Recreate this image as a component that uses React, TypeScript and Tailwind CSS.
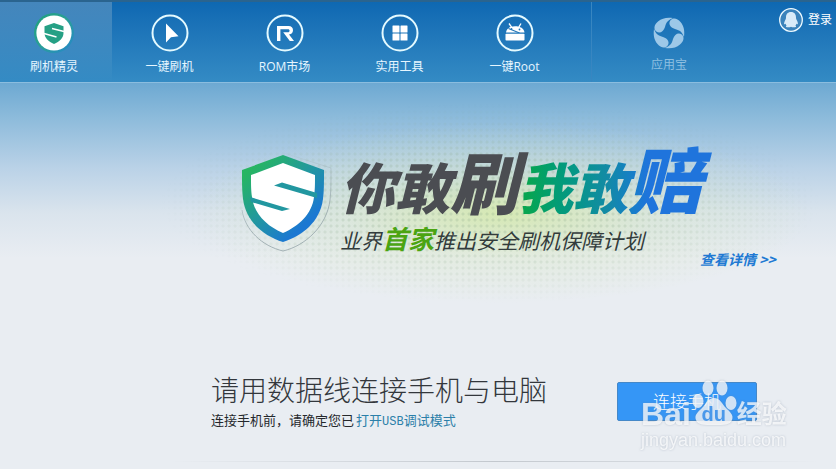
import React from 'react'

const SANS = "font-['Open_Sans','Noto_Sans_CJK_SC',sans-serif]"

function ShieldIcon() {
  return (
    <svg className="w-10 h-10" viewBox="0 0 40 40">
      <defs>
        <linearGradient id="ring" x1="0" y1="0" x2="1" y2="1">
          <stop offset="0" stopColor="#1fa07a" />
          <stop offset="0.5" stopColor="#2a9f98" />
          <stop offset="1" stopColor="#2585cf" />
        </linearGradient>
      </defs>
      <circle cx="20" cy="20" r="20" fill="url(#ring)" />
      <circle cx="20" cy="20" r="17.6" fill="#fff" />
      <path d="M20 10l9.5 3.2v6.8c0 5-4 8.5-9.5 11-5.5-2.5-9.5-6-9.5-11v-6.8z" fill="#25a085" />
      <path d="M30 18.5l-12-3M10 20.5l12.5 3.5" stroke="#fff" strokeWidth="1.5" fill="none" />
    </svg>
  )
}

function CursorIcon() {
  return (
    <path d="M16 10.500v19l5-5.200 7.500-1z" fill="#fff" />
  )
}

function RomIcon() {
  return (
    <path
      d="M12 13h11.5c3 0 4.5 1.8 4.5 4.200 0 2.300-1.400 4-4 4.200l5 6.600h-4.200l-6.600-8.700h4.800c1 0 1.600-.6 1.600-1.500s-.6-1.600-1.600-1.600h-7.600V28H12z"
      fill="#fff"
    />
  )
}

function GridIcon() {
  return (
    <g fill="#fff">
      <rect x="12.5" y="12.5" width="7" height="7" rx="0.5" />
      <rect x="20.5" y="12.5" width="7" height="7" rx="0.5" />
      <rect x="12.5" y="20.5" width="7" height="7" rx="0.5" />
      <rect x="20.5" y="20.5" width="7" height="7" rx="0.5" />
    </g>
  )
}

function RootIcon() {
  return (
    <g>
      <path d="M11 19.5c.6-4 3.6-6.2 9-6.2s8.9 2.2 9.5 6.2z" fill="#fff" />
      <path d="M14 10.5l2.6 3.6M26 10.5l-2.2 3.6" stroke="#fff" strokeWidth="1.3" />
      <path d="M13.5 15.5l11 4.5" stroke="#2276b8" strokeWidth="1.2" />
      <circle cx="16.5" cy="16" r="0.9" fill="#2276b8" />
      <circle cx="24.5" cy="16.5" r="0.9" fill="#2276b8" />
      <rect x="10.5" y="20.8" width="19" height="6.8" rx="0.8" fill="#fff" />
    </g>
  )
}

const NAV_ITEMS = [
  { label: '一键刷机', Icon: CursorIcon },
  { label: 'ROM市场', Icon: RomIcon },
  { label: '实用工具', Icon: GridIcon },
  { label: '一键Root', Icon: RootIcon },
]

const PETAL = 'M17.5 3.3C20 .2 24.5 1.2 27.5 5 31 9 31.8 14 31 20 28.5 13.8 26 13.2 22 12 17 10.5 15 6.5 17.5 3.3z'

function Header() {
  return (
    <header className="flex h-[83px] border-t-2 border-t-[#2a648f] border-b border-b-[#8bbddf] bg-linear-to-b from-[#0e68b2] to-[#348bc4] text-xs text-[#e6f6ff]">
      <nav className="flex">
        <button
          type="button"
          className="flex flex-col items-center w-28 pt-[11px] pr-1 bg-linear-to-b from-[#4486bc] to-[#348bc4]"
        >
          <ShieldIcon />
          <span className="mt-1 leading-5">刷机精灵</span>
        </button>
        {NAV_ITEMS.map(({ label, Icon }) => (
          <button key={label} type="button" className="flex flex-col items-center w-[115px] pt-[11px]">
            <svg className="w-10 h-10" viewBox="0 0 40 40">
              <circle cx="20" cy="20" r="17.5" fill="none" stroke="#e4faff" strokeWidth="2" />
              <Icon />
            </svg>
            <span className="mt-1 leading-5">{label}</span>
          </button>
        ))}
      </nav>
      <div className="w-5 shrink-0 border-r border-[#3886c1]" />
      <button type="button" className="flex flex-col items-center w-[154px] pt-[15px] text-[#8ebfe0]">
        <svg className="w-8 h-8" viewBox="0 0 32 32" fill="#9dc8e8">
          {[0, 90, 180, 270].map((angle) => (
            <path key={angle} d={PETAL} transform={`rotate(${angle} 16 16)`} />
          ))}
        </svg>
        <span className="mt-1 leading-6">应用宝</span>
      </button>
      <button type="button" className="ml-auto mr-1 flex gap-1 items-center self-start h-9 text-white whitespace-nowrap">
        <svg className="w-[26px] h-[26px]" viewBox="0 0 26 26">
          <circle cx="13" cy="13" r="11.3" fill="#3b83bb" stroke="#eefaff" strokeWidth="1.3" />
          <path
            d="M13 5c3.5 0 5 2.4 5 5.5 0 1.5.5 2.2 1.2 3.4.8 1.5 1 3.2.2 3.400-.5.1-.9-.8-1-.8-.1 1-.5 1.700-1 2.200.9.4 1.100 1.300-.4 1.500-1.600.2-3.300 0-4-.5-.7.5-2.400.7-4 .5-1.500-.2-1.300-1.100-.4-1.500-.5-.5-.9-1.200-1-2.200-.1 0-.5.9-1 .8-.8-.2-.6-1.900.2-3.400C7.500 12.700 8 12 8 10.500 8 7.400 9.500 5 13 5z"
            fill="#d9ebf8"
          />
        </svg>
        登录
      </button>
    </header>
  )
}

function ShieldLogo() {
  return (
    <svg className="w-[92px] h-[102px] shrink-0" viewBox="0 0 92 102">
      <defs>
        <linearGradient id="shield" x1="0" y1="0.1" x2="0.8" y2="1">
          <stop offset="0.1" stopColor="#27b562" />
          <stop offset="0.5" stopColor="#2297a0" />
          <stop offset="0.85" stopColor="#1b78d2" />
        </linearGradient>
        <linearGradient id="outline" x1="0" y1="0" x2="0.3" y2="1">
          <stop offset="0.1" stopColor="#a3b5ba" stopOpacity="0.1" />
          <stop offset="0.8" stopColor="#93a3a8" />
        </linearGradient>
      </defs>
      <path d="M44 1l47 15c0 16 0 22-1 32C87 74 65 94 43 99 22 94 5 78 2 58" fill="none" stroke="url(#outline)" strokeWidth="0.8" />
      <path d="M43 3l41 15c0 14 0 20-1 29C80 70 62 84 43 90 24 84 6 70 3 47 2 38 2 32 2 18z" fill="url(#shield)" />
      <path d="M43 11l32 12c0 10 0 15-1 22-2 17-15 29-31 36-16-7-29-19-31-36-1-7-1-12-1-22z" fill="#fff" />
      <path d="M77 46L34 33.5l8-3L77 41zM10 45l40 12-8 2L11 50z" fill="#2297a0" />
    </svg>
  )
}

function Banner() {
  return (
    <section className="relative flex pt-[69px] pl-[240px] h-[220px] whitespace-nowrap">
      {/* dotted green glow behind the slogan */}
      <div className="absolute top-10 bottom-0 left-[190px] w-[620px] bg-[radial-gradient(closest-side,rgba(212,234,160,0.75),rgba(215,232,190,0.35)_50%,transparent)]" />
      <div className="absolute top-5 bottom-0 left-[160px] w-[660px] bg-[radial-gradient(circle,rgba(140,170,140,0.25)_1px,transparent_2px)] bg-size-[6px_6px] mask-[radial-gradient(closest-side,black_40%,transparent)]" />
      <div className="relative">
        <ShieldLogo />
      </div>
      <div className="relative ml-2 -mt-3 font-['Noto_Sans_CJK_SC',sans-serif] italic">
        <h1 className="flex items-baseline h-[82px] leading-none font-black text-[55px] text-[#4b4d52]">
          <span>你敢</span>
          <span className="text-[68px]">刷</span>
          <span className="pr-4 text-transparent bg-clip-text bg-linear-to-r from-[#08a551] from-5% via-[#148aa6] via-45% to-[#1f74dc] to-65%">
            我敢<span className="text-[74px]">赔</span>
          </span>
        </h1>
        <p className="flex items-baseline h-8 leading-8 text-[21px] text-[#333c3c]">
          业界<span className="text-[26px] leading-8 font-bold text-[#4ba412]">首家</span>推出安全刷机保障计划
        </p>
        <a href="#detail" className="block -mt-[7px] ml-[360px] leading-6 text-sm font-bold text-[#2079d3]">
          查看详情 &gt;&gt;
        </a>
      </div>
    </section>
  )
}

function Watermark() {
  return (
    <div className="pointer-events-none absolute left-6 -top-1 w-[152px] font-['Liberation_Sans','Noto_Sans_CJK_SC',sans-serif] text-white/75 whitespace-nowrap drop-shadow-[0_0_1px_rgba(110,125,150,0.5)]">
      <div className="flex items-end h-12 font-bold">
        <span className="text-[32px] leading-6">Bai</span>
        <div className="relative w-[46px] h-12 shrink-0">
          <svg className="w-[46px] h-12" viewBox="0 0 46 48" fill="currentColor">
            <ellipse cx="17" cy="10" rx="5.5" ry="7.5" />
            <ellipse cx="31" cy="10" rx="5.5" ry="7.5" />
            <ellipse cx="7" cy="23" rx="5.5" ry="7" />
            <ellipse cx="40" cy="25" rx="5.5" ry="7" />
            <path d="M23 20c6 0 8 6 12 10s8 7 6 12c-2 5-8 5-18 5s-16 0-18-5c-2-5 2-8 6-12s6-10 12-10z" />
          </svg>
          <span className="absolute inset-x-0 bottom-0 text-center text-xl leading-6 text-[#4a98ea]">du</span>
        </div>
        <span className="text-[25px] leading-6">经验</span>
      </div>
      <div className="text-lg leading-7">jingyan.baidu.com</div>
    </div>
  )
}

function ConnectPanel() {
  return (
    <section className="flex items-start justify-between pt-[68px] pl-[211px] pr-[79px] whitespace-nowrap">
      <div className="font-['Noto_Sans_CJK_SC',sans-serif]">
        <h2 className="text-[28px] leading-9 font-light text-[#33373c]">请用数据线连接手机与电脑</h2>
        <p className="mt-[5px] text-[13px] leading-4 text-[#25282c]">
          连接手机前，请确定您已
          <a href="#usb" className="ml-[2px] text-[#2b7fa9]">
            打开<span className="font-['Liberation_Mono',monospace] text-xs">USB</span>调试模式
          </a>
        </p>
      </div>
      <div className="relative mt-[11px]">
        <button
          type="button"
          className="block w-[140px] h-[39px] rounded-xs border border-[#4588c8] bg-[#3596f6] text-[17px] text-white font-light"
        >
          连接手机
        </button>
        <Watermark />
      </div>
    </section>
  )
}

export default function App() {
  return (
    <div className={`min-h-screen flex flex-col bg-[#e9edf2] ${SANS}`}>
      <Header />
      <main className="flex-1 bg-[linear-gradient(to_bottom,#6da9d2_0px,#8dbbdb_35px,#bad2e7_85px,#dae4ed_130px,#e9edf2_175px)]">
        <Banner />
        <ConnectPanel />
        <div className="mt-[31px] ml-[170px] mr-4 h-px bg-linear-to-r from-transparent via-[#c3c8ce] to-transparent" />
      </main>
    </div>
  )
}
